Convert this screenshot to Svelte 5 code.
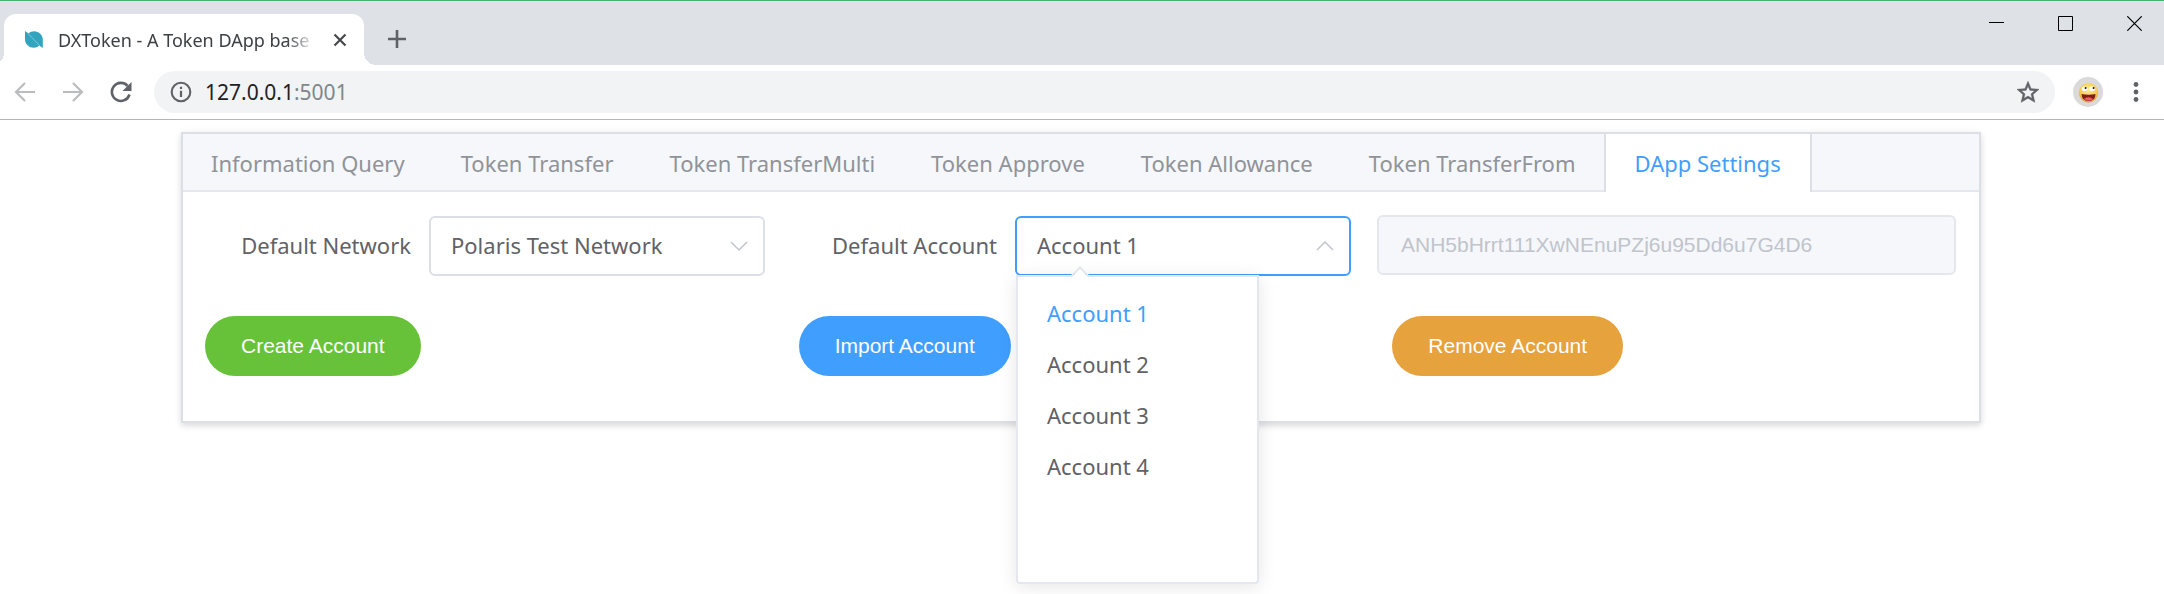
<script>
  const tabs = [
    'Information Query',
    'Token Transfer',
    'Token TransferMulti',
    'Token Approve',
    'Token Allowance',
    'Token TransferFrom',
    'DApp Settings'
  ];
  const accounts = ['Account 1', 'Account 2', 'Account 3', 'Account 4'];
  let activeTab = $state('DApp Settings');
  let network = $state('Polaris Test Network');
  let account = $state('Account 1');
  let open = $state(true);

  function choose(name) {
    account = name;
    open = false;
  }
</script>

<header class="browser">
  <div class="strip">
    <div class="page-tab">
      <svg class="favicon" width="18" height="18" viewBox="0 0 18 18" aria-hidden="true">
        <path d="M0 0 3.6 2.6C5 1 7 .3 9.2 .3 14 .3 17.8 4 17.8 8.5V17L14.2 14.6C12.7 16 10.8 16.8 8.8 16.8 4 16.8 0 13 0 8.5Z" fill="#32a4be" />
        <path d="M3 2.4 14.8 14.8" stroke="#8fd0de" stroke-width=".8" />
      </svg>
      <span class="page-title">DXToken - A Token DApp base</span>
      <button class="icon-button" aria-label="Close tab">
        <svg width="14" height="14" viewBox="0 0 14 14"><path d="M1.5 1.5 12.5 12.5M12.5 1.5 1.5 12.5" stroke="#45494d" stroke-width="2.2" /></svg>
      </button>
    </div>
    <button class="icon-button new-tab" aria-label="New tab">
      <svg width="18" height="18" viewBox="0 0 18 18"><path d="M9 0V18M0 9H18" stroke="#5f6368" stroke-width="2.6" /></svg>
    </button>
    <div class="window-buttons">
      <button class="icon-button" aria-label="Minimize">
        <svg width="15" height="15" viewBox="0 0 15 15"><path d="M0 6.5H15" stroke="#000" /></svg>
      </button>
      <button class="icon-button" aria-label="Maximize">
        <svg width="15" height="15" viewBox="0 0 15 15"><path d="M.5.5H14.5V14.5H.5Z" fill="none" stroke="#000" /></svg>
      </button>
      <button class="icon-button" aria-label="Close window">
        <svg width="15" height="15" viewBox="0 0 15 15"><path d="M.3.3 14.7 14.7M14.7.3.3 14.7" stroke="#000" stroke-width="1.2" /></svg>
      </button>
    </div>
  </div>
  <div class="toolbar">
    <div class="nav">
      <button class="icon-button" aria-label="Back">
        <svg width="22" height="22" viewBox="0 0 22 22"><path d="M21 11H2.5M11 2 2 11 11 20" fill="none" stroke="#babcbe" stroke-width="2.2" /></svg>
      </button>
      <button class="icon-button" aria-label="Forward">
        <svg width="22" height="22" viewBox="0 0 22 22"><path d="M1 11H19.5M11 2 20 11 11 20" fill="none" stroke="#babcbe" stroke-width="2.2" /></svg>
      </button>
      <button class="icon-button" aria-label="Reload">
        <svg width="22" height="22" viewBox="0 0 22 22"><path d="M19.5 13.5A9 9 0 1 1 17.5 4.8" fill="none" stroke="#5f6368" stroke-width="2.6" /><path d="M21.5 1V10H12.5Z" fill="#5f6368" /></svg>
      </button>
    </div>
    <div class="address">
      <svg width="22" height="22" viewBox="0 0 22 22" aria-hidden="true"><circle cx="11" cy="11" r="9.3" fill="none" stroke="#5f6368" stroke-width="2.1" /><path d="M11 9.8V16M11 5.8V8" stroke="#5f6368" stroke-width="2.2" /></svg>
      <span class="url">127.0.0.1<span class="port">:5001</span></span>
      <button class="icon-button" aria-label="Bookmark this page">
        <svg width="22" height="22" viewBox="0 0 24 24"><path d="M22 9.24l-7.19-.62L12 2 9.19 8.63 2 9.24l5.46 4.73L5.82 21 12 17.27 18.18 21l-1.63-7.03L22 9.24zM12 15.4l-3.76 2.27 1-4.28-3.32-2.88 4.38-.38L12 6.1l1.71 4.04 4.38.38-3.32 2.88 1 4.28L12 15.4z" fill="#5f6368" stroke="#5f6368" stroke-width=".5" transform="translate(-2.4 -2) scale(1.2)" /></svg>
      </button>
    </div>
    <button class="icon-button" aria-label="Profile">
      <svg width="30" height="30" viewBox="0 0 30 30">
        <defs><radialGradient id="face" cx=".5" cy=".35" r=".7"><stop offset="0" stop-color="#fff08a" /><stop offset=".65" stop-color="#f9c84c" /><stop offset="1" stop-color="#d98d28" /></radialGradient></defs>
        <circle cx="15" cy="15" r="15" fill="#dadada" />
        <circle cx="15.5" cy="15.7" r="9.7" fill="url(#face)" />
        <ellipse cx="11.6" cy="11.8" rx="2.9" ry="2.4" fill="#fff" /><ellipse cx="19.3" cy="11.8" rx="2.9" ry="2.4" fill="#fff" />
        <circle cx="12.6" cy="11" r="1" fill="#111" /><circle cx="20.6" cy="11" r="1" fill="#111" />
        <path d="M8.5 17Q15.5 18.4 22.5 17 22.5 24 15.5 24 8.8 24 8.5 17Z" fill="#851c19" /><path d="M11 22Q15 18.6 20 22 16 25 11 22Z" fill="#ee5e65" />
      </svg>
    </button>
    <button class="icon-button" aria-label="Menu">
      <svg width="6" height="22" viewBox="0 0 6 22"><g fill="#5f6368"><circle cx="3" cy="3.5" r="2.4" /><circle cx="3" cy="11" r="2.4" /><circle cx="3" cy="18.5" r="2.4" /></g></svg>
    </button>
  </div>
</header>

<main>
  <section class="card">
    <div class="tabs" role="tablist">
      {#each tabs as tab}
        <button class="tab" class:active={tab === activeTab} role="tab" aria-selected={tab === activeTab} onclick={() => (activeTab = tab)}>{tab}</button>
      {/each}
    </div>
    <div class="panel">
      <div class="fields">
        <div class="field">
          <label for="network">Default Network</label>
          <div class="select">
            <select id="network" bind:value={network}>
              <option>Polaris Test Network</option>
            </select>
            <svg class="chevron" width="18" height="12" viewBox="0 0 18 12" aria-hidden="true"><path d="M1 2 9 10 17 2" fill="none" stroke="#c0c4cc" stroke-width="1.5" /></svg>
          </div>
        </div>
        <div class="field">
          <label for="account">Default Account</label>
          <div class="select" class:open>
            <select id="account" bind:value={account}>
              {#each accounts as name}<option>{name}</option>{/each}
            </select>
            <svg class="chevron" width="18" height="12" viewBox="0 0 18 12" aria-hidden="true"><path d="M1 10 9 2 17 10" fill="none" stroke="#c0c4cc" stroke-width="1.5" /></svg>
            {#if open}
              <div class="menu" role="listbox" aria-label="Default Account">
                {#each accounts as name}
                  <button class="choice" class:chosen={name === account} role="option" aria-selected={name === account} onclick={() => choose(name)}>{name}</button>
                {/each}
              </div>
            {/if}
          </div>
        </div>
        <input class="wallet" aria-label="Account address" value="ANH5bHrrt111XwNEnuPZj6u95Dd6u7G4D6" disabled />
      </div>
      <div class="actions">
        <button class="pill create">Create Account</button>
        <button class="pill import">Import Account</button>
        <button class="pill remove">Remove Account</button>
      </div>
    </div>
  </section>
</main>

<style>
  :global(body) {
    background: #fff;
    font-family: 'Noto Sans', 'Open Sans', sans-serif;
  }
  :global(#app) {
    display: flex;
    flex-direction: column;
    min-height: 100vh;
  }
  *, *::before, *::after { box-sizing: border-box; }
  button, select, input { font: inherit; margin: 0; }
  .icon-button {
    display: flex;
    flex: none;
    padding: 0;
    border: 0;
    background: none;
  }
  .browser { border-bottom: 1px solid #b6b4b6; }
  .strip {
    display: flex;
    align-items: flex-end;
    height: 65px;
    padding: 0 22px 0 4px;
    border-top: 1px solid #45b271;
    background: #dee1e6;
  }
  .page-tab {
    position: relative;
    display: flex;
    align-items: center;
    gap: 15px;
    width: 360px;
    height: 51px;
    padding: 0 17px 0 21px;
    border-radius: 12px 12px 0 0;
    background: #fff;
  }
  .page-tab::before, .page-tab::after {
    content: '';
    position: absolute;
    bottom: 0;
    width: 12px;
    height: 12px;
  }
  .page-tab::before {
    right: 100%;
    background: radial-gradient(circle at 0 0, transparent 12px, #fff 12px);
  }
  .page-tab::after {
    left: 100%;
    background: radial-gradient(circle at 100% 0, transparent 12px, #fff 12px);
  }
  .favicon { flex: none; }
  .page-title {
    flex: 1;
    min-width: 0;
    overflow: hidden;
    white-space: nowrap;
    font-size: 18px;
    color: #3c4043;
    mask-image: linear-gradient(to right, #000 88%, transparent 99%);
  }
  .new-tab { margin: 0 0 17px 24px; }
  .window-buttons {
    display: flex;
    align-self: flex-start;
    gap: 54px;
    margin-left: auto;
    padding-top: 15px;
  }
  .toolbar {
    display: flex;
    align-items: center;
    gap: 18px;
    height: 54px;
    padding: 0 25px 0 14px;
  }
  .nav { display: flex; gap: 26px; }
  .address {
    display: flex;
    flex: 1;
    align-items: center;
    gap: 13px;
    height: 42px;
    margin: 0 0 0 4px;
    padding: 0 16px;
    border-radius: 21px;
    background: #f1f3f4;
  }
  .url { flex: 1; font-size: 21px; line-height: 28px; color: #202124; }
  .port { color: #80868b; }
  .address + .icon-button { margin-right: 12px; }

  main { flex: 1; padding: 12px 183px 0 181px; }
  .card {
    border: 2px solid #dcdfe6;
    box-shadow: 0 3px 6px rgba(0, 0, 0, 0.12), 0 0 9px rgba(0, 0, 0, 0.04);
  }
  .tabs {
    display: flex;
    height: 58px;
    background: linear-gradient(#e4e7ed, #e4e7ed) bottom / 100% 2px no-repeat #f5f7fa;
  }
  .tab {
    padding: 0 26px;
    border: solid transparent;
    border-width: 0 2px;
    background: none;
    font-size: 22px;
    white-space: nowrap;
    color: #909399;
  }
  .tab.active {
    padding: 0 29px;
    border-color: #dcdfe6;
    background: #fff;
    color: #409eff;
  }
  .panel { padding: 23px 23px 23px 22px; }
  .fields {
    display: grid;
    grid-template-columns: 560fr 560fr 579fr;
    gap: 26px;
  }
  .field {
    display: flex;
    align-items: center;
    padding-top: 1px;
  }
  label {
    flex: 1;
    padding: 0 18px 2px 0;
    text-align: right;
    font-size: 22px;
    color: #606266;
  }
  .select { position: relative; width: 60%; }
  select, .wallet {
    display: block;
    width: 100%;
    height: 60px;
    padding: 0 20px;
    border: 2px solid #dcdfe6;
    border-radius: 6px;
    background: #fff;
    font-size: 22px;
    color: #606266;
  }
  select { padding-bottom: 2px; appearance: none; }
  .open select { border-color: #409eff; }
  .chevron {
    position: absolute;
    top: 24px;
    right: 17px;
    pointer-events: none;
  }
  .wallet {
    padding: 0 22px;
    border-color: #e4e7ed;
    background: #f5f7fa;
    font-family: 'Liberation Sans', Arial, sans-serif;
    font-size: 21px;
    color: #c0c4cc;
  }
  .menu {
    position: absolute;
    z-index: 1;
    top: 59px;
    left: 1px;
    width: 243px;
    height: 309px;
    padding: 10px 0;
    border: 2px solid #e4e7ed;
    border-radius: 0 0 4px 4px;
    background: #fff;
    box-shadow: 0 3px 18px rgba(0, 0, 0, 0.1);
  }
  .menu::before {
    content: '';
    position: absolute;
    top: -8px;
    left: 55px;
    width: 14px;
    height: 14px;
    border: solid #e4e7ed;
    border-width: 2px 0 0 2px;
    background: linear-gradient(135deg, #fff 60%, transparent 60%);
    transform: rotate(45deg);
  }
  .choice {
    display: block;
    width: 100%;
    height: 51px;
    padding: 0 29px;
    border: 0;
    background: none;
    text-align: left;
    font-size: 22px;
    color: #606266;
  }
  .chosen { color: #409eff; }
  .actions {
    display: grid;
    grid-template-columns: repeat(3, 1fr);
    gap: 30px;
    padding: 40px 0 22px;
  }
  .pill {
    justify-self: start;
    height: 60px;
    padding: 0 36px;
    border: 0;
    border-radius: 30px;
    font-family: 'Liberation Sans', Arial, sans-serif;
    font-size: 21px;
    color: #fff;
  }
  .create { background: #67c23a; }
  .import { background: #409eff; }
  .remove { background: #e6a23c; }
</style>
